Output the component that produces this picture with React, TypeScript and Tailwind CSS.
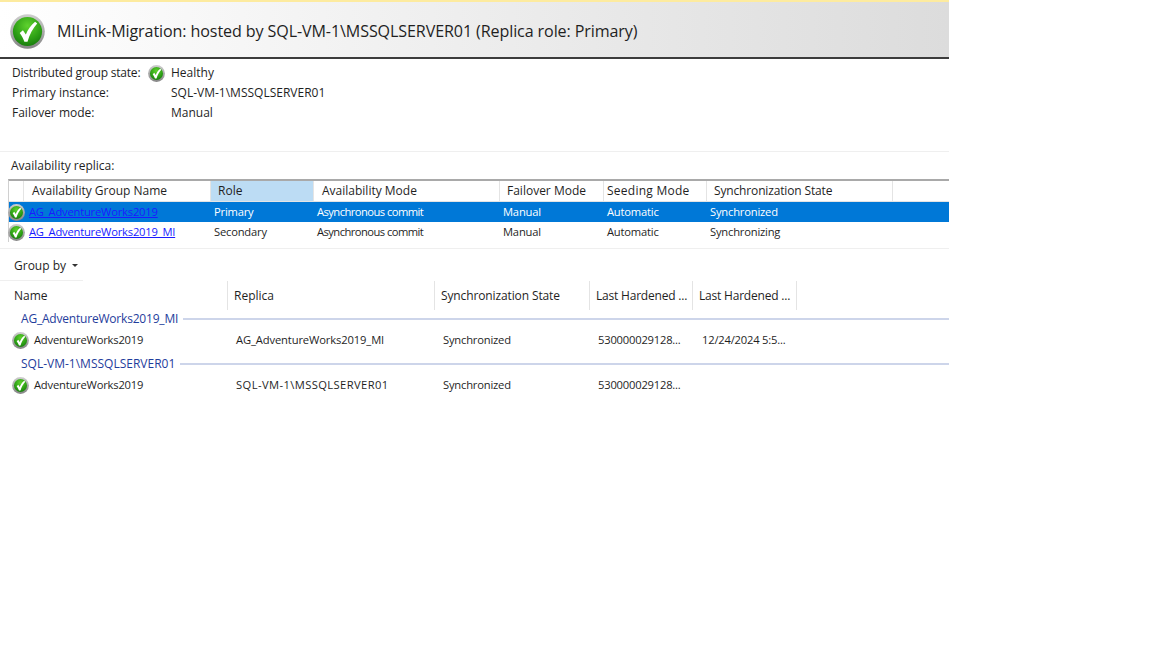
const FONT = "font-['Open_Sans','Noto_Sans',sans-serif]";

/** green round check icon, same drawing at every size */
function CheckIcon({ size }: { size: number }) {
  // the big banner icon has a thinner ring than the small ones
  const inner = size > 30 ? 15 : 13.8;
  return (
    <svg width={size} height={size} viewBox="0 0 36 36" className="shrink-0">
      <defs>
        <linearGradient id="ring" x1="0" y1="0" x2="0" y2="1">
          <stop offset="0" stopColor="#cfcfcf" />
          <stop offset="1" stopColor="#858585" />
        </linearGradient>
        <radialGradient id="ball" cx="0.5" cy="0.3" r="0.8">
          <stop offset="0" stopColor="#5fd22e" />
          <stop offset="0.6" stopColor="#2b9d14" />
          <stop offset="1" stopColor="#12700c" />
        </radialGradient>
      </defs>
      <circle cx="18" cy="18" r="17.8" fill="url(#ring)" />
      <circle cx="18" cy="18" r={inner} fill="url(#ball)" />
      <path
        d="M10 19.5 L13.3 16.6 L16.3 21 C18.5 16 21.5 11.5 25.8 8 L28 9.8 C23.3 15 20.2 21 18 28.5 L14.8 28.5 C13.5 25 12 22 10 19.5 Z"
        fill="#fff"
      />
    </svg>
  );
}

const topCols = [
  { label: "Availability Group Name", cls: "w-[187px] pl-[8px]" },
  { label: "Role", cls: "w-[103px] pl-[7px] bg-[#bcdcf4]" },
  { label: "Availability Mode", cls: "w-[186px] pl-[8px]" },
  { label: "Failover Mode", cls: "w-[104px] pl-[7px]" },
  { label: "Seeding Mode", cls: "w-[103px] pl-[3px] tracking-[0.25px]" },
  { label: "Synchronization State", cls: "w-[186px] pl-[7px] tracking-[-0.15px]" },
];

const replicas = [
  { name: "AG_AdventureWorks2019", role: "Primary", sync: "Synchronized", selected: true },
  { name: "AG_AdventureWorks2019_MI", role: "Secondary", sync: "Synchronizing", selected: false },
];

const bottomCols = [
  { label: "Name", cls: "w-[220px]" },
  { label: "Replica", cls: "w-[207px]" },
  { label: "Synchronization State", cls: "w-[155px] tracking-[-0.12px]" },
  { label: "Last Hardened ...", cls: "w-[103px] tracking-[-0.2px]" },
  { label: "Last Hardened ...", cls: "w-[104px] tracking-[-0.2px]" },
];

const groups = [
  {
    title: "AG_AdventureWorks2019_MI",
    titleCls: "tracking-[-0.2px]",
    replica: "AG_AdventureWorks2019_MI",
    replicaCls: "tracking-[-0.12px]",
    last: "12/24/2024 5:5...",
  },
  {
    title: "SQL-VM-1\\MSSQLSERVER01",
    titleCls: "",
    replica: "SQL-VM-1\\MSSQLSERVER01",
    replicaCls: "tracking-[0.4px]",
    last: "",
  },
];

export default function App() {
  return (
    <div className={`${FONT} w-[1152px] h-[648px] bg-white text-[#1f1f1f] overflow-hidden`}>
      <div className="w-[949px]">
        {/* banner */}
        <div className="h-[2px] bg-[#fdeb9f]" />
        <div className="h-[57px] flex items-center gap-[12px] pl-[10px] pt-[3px] bg-gradient-to-r from-white to-[#dcdcdc] border-b-2 border-[#3c3c3c]">
          <CheckIcon size={35} />
          <span className="text-[16.1px] tracking-[-0.11px]">
            MILink-Migration: hosted by SQL-VM-1\MSSQLSERVER01 (Replica role: Primary)
          </span>
        </div>

        {/* summary */}
        <div className="h-[93px] pl-[12px] pt-[4px] text-[12px] border-b border-[#efefef]">
          <div className="h-[20px] flex items-center">
            <span className="w-[136px] tracking-[-0.2px]">Distributed group state:</span>
            <CheckIcon size={17} />
            <span className="ml-[6px]">Healthy</span>
          </div>
          <div className="h-[20px] flex items-center">
            <span className="w-[159px]">Primary instance:</span>
            <span>SQL-VM-1\MSSQLSERVER01</span>
          </div>
          <div className="h-[20px] flex items-center">
            <span className="w-[159px]">Failover mode:</span>
            <span>Manual</span>
          </div>
        </div>

        {/* availability replica grid */}
        <div className="h-[27px] pl-[11px] flex items-center text-[12px]">Availability replica:</div>
        <div className="ml-[8px] border-t-2 border-l border-[#a9a9a9] border-l-[#d0d0d0]">
          <div className="h-[21px] flex text-[12px] border-b border-[#e4e4e4]">
            <div className="w-[15px] border-r border-[#e4e4e4]" />
            {topCols.map((c) => (
              <div key={c.label} className={`${c.cls} flex items-center border-r border-[#e4e4e4]`}>
                {c.label}
              </div>
            ))}
          </div>
          {replicas.map((r) => (
            <div
              key={r.name}
              className={`h-[20px] flex items-center text-[11.2px] tracking-[-0.2px] ${r.selected ? "bg-[#0078d7] text-white" : ""}`}
            >
              <div className="w-[20px] ml-[-1px] mr-[1px]">
                <CheckIcon size={17} />
              </div>
              <span className="w-[185px] underline text-[#1a1aff]">{r.name}</span>
              <span className="w-[103px]">{r.role}</span>
              <span className="w-[186px] tracking-[-0.55px]">Asynchronous commit</span>
              <span className="w-[104px]">Manual</span>
              <span className="w-[103px]">Automatic</span>
              <span>{r.sync}</span>
            </div>
          ))}
        </div>
        <div className="h-[7px] border-b border-[#efefef]" />

        {/* group by */}
        <div className="h-[31px] pl-[14px] pt-[2px] flex items-center gap-[6px] text-[12px]">
          Group by
          <span className="w-0 h-0 border-x-[3px] border-x-transparent border-t-[3px] border-t-[#333]" />
        </div>

        {/* database grid */}
        <div className="w-[83px] border-t border-[#efefef]" />
        <div className="h-[29px] pl-[8px] flex text-[12px]">
          {bottomCols.map((c, i) => (
            <div key={i} className={`${c.cls} pl-[6px] flex items-center border-r border-[#e4e4e4]`}>
              {c.label}
            </div>
          ))}
        </div>
        {groups.map((g) => (
          <div key={g.title}>
            <div className="h-[17px] pl-[21px] flex items-center gap-[5px] text-[12px] text-[#1f3d9c]">
              <span className={g.titleCls}>{g.title}</span>
              <span className="flex-1 h-[2px] bg-[#cdd5ea]" />
            </div>
            <div className="h-[28px] pl-[12px] pb-[2px] flex items-center text-[11.2px] tracking-[-0.2px]">
              <CheckIcon size={17} />
              <span className="ml-[5px] w-[202px]">AdventureWorks2019</span>
              <span className={`w-[207px] ${g.replicaCls}`}>{g.replica}</span>
              <span className="w-[155px]">Synchronized</span>
              <span className="w-[104px]">530000029128...</span>
              <span>{g.last}</span>
            </div>
          </div>
        ))}
      </div>
    </div>
  );
}
